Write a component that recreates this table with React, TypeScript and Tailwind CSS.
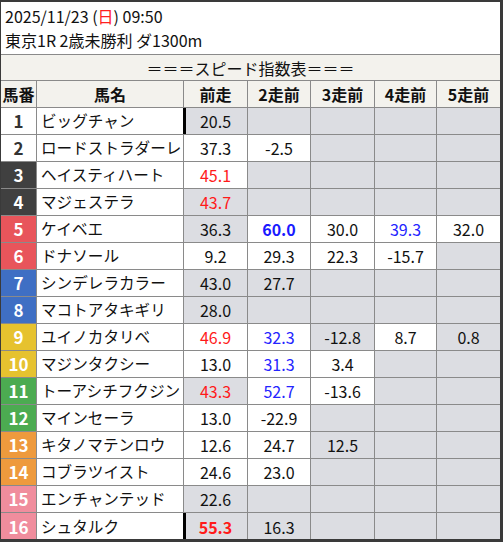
import React from 'react';

type Cell = { v?: string; g?: boolean; t?: 'r' | 'b' | 'rb' | 'bb' };
type Row = { n: number; name: string; bar?: boolean; cells: Cell[] };

const G = (v?: string, t?: Cell['t']): Cell => ({ v, g: true, t });
const W = (v?: string, t?: Cell['t']): Cell => ({ v, g: false, t });

const rows: Row[] = [
    { n: 1, name: 'ビッグチャン', bar: true, cells: [G('20.5'), G(), G(), G(), G()] },
    { n: 2, name: 'ロードストラダーレ', cells: [W('37.3'), W('-2.5'), G(), G(), G()] },
    { n: 3, name: 'ヘイスティハート', cells: [W('45.1', 'r'), G(), G(), G(), G()] },
    { n: 4, name: 'マジェステラ', cells: [G('43.7', 'r'), G(), G(), G(), G()] },
    { n: 5, name: 'ケイベエ', cells: [G('36.3'), W('60.0', 'bb'), W('30.0'), W('39.3', 'b'), W('32.0')] },
    { n: 6, name: 'ドナソール', cells: [W('9.2'), W('29.3'), W('22.3'), W('-15.7'), G()] },
    { n: 7, name: 'シンデレラカラー', cells: [G('43.0'), G('27.7'), G(), G(), G()] },
    { n: 8, name: 'マコトアタキギリ', cells: [G('28.0'), G(), G(), G(), G()] },
    { n: 9, name: 'ユイノカタリベ', cells: [W('46.9', 'r'), W('32.3', 'b'), G('-12.8'), W('8.7'), G('0.8')] },
    { n: 10, name: 'マジンタクシー', cells: [W('13.0'), W('31.3', 'b'), W('3.4'), G(), G()] },
    { n: 11, name: 'トーアシチフクジン', cells: [G('43.3', 'r'), W('52.7', 'b'), W('-13.6'), G(), G()] },
    { n: 12, name: 'マインセーラ', cells: [W('13.0'), W('-22.9'), G(), G(), G()] },
    { n: 13, name: 'キタノマテンロウ', cells: [W('12.6'), W('24.7'), G('12.5'), G(), G()] },
    { n: 14, name: 'コブラツイスト', cells: [W('24.6'), W('23.0'), G(), G(), G()] },
    { n: 15, name: 'エンチャンテッド', cells: [G('22.6'), G(), G(), G(), G()] },
    { n: 16, name: 'シュタルク', bar: true, cells: [G('55.3', 'rb'), G('16.3'), G(), G(), G()] },
];

const gateColor = (n: number) => {
    if (n <= 2) return 'bg-white text-[#333]';
    if (n <= 4) return 'bg-[#404040] text-white';
    if (n <= 6) return 'bg-[#e8555b] text-white';
    if (n <= 8) return 'bg-[#3f6fc4] text-white';
    if (n <= 10) return 'bg-[#e6c22f] text-white';
    if (n <= 12) return 'bg-[#4cab51] text-white';
    if (n <= 14) return 'bg-[#ee9a3d] text-white';
    return 'bg-[#f08d9d] text-white';
};

const textColor = (t?: Cell['t']) => {
    if (t === 'r') return 'text-[#ff1a1a]';
    if (t === 'rb') return 'text-[#ff1a1a] font-bold';
    if (t === 'b') return 'text-[#2424ff]';
    if (t === 'bb') return 'text-[#1a1aff] font-bold';
    return 'text-[#111]';
};

const cols = 'grid grid-cols-[36px_147px_64px_63px_64px_62px_63px]';
const font = { fontFamily: '"Noto Sans CJK JP", "Noto Sans", sans-serif' };

export default function App() {
    return (
        <div
            className="w-[503px] h-[542px] bg-white border-[#3a3a3a] border-l-[1px] border-t-[2px] border-r-[3px] border-b-[3px] overflow-hidden text-[#111]"
            style={font}
        >
            {/* race info */}
            <div className="h-[52px] px-[4px] flex flex-col justify-center text-[16px] leading-[24px]">
                <div>
                    2025/11/23 (<span className="text-[#ff2020]">日</span>) 09:50
                </div>
                <div>東京1R 2歳未勝利 ダ1300m</div>
            </div>

            <div className="h-[27px] border-y border-[#8a8a8a] bg-[#f3f2ed] flex items-center justify-center text-[16px]">
                ＝＝＝スピード指数表＝＝＝
            </div>

            <div className={`${cols} h-[27px] border-b border-[#8a8a8a] bg-[#f3f2ed] font-bold text-[16px]`}>
                {['馬番', '馬名', '前走', '2走前', '3走前', '4走前', '5走前'].map((h, i) => (
                    <div
                        key={h}
                        className={`flex items-center justify-center ${i < 6 ? 'border-r border-[#8a8a8a]' : ''}`}
                    >
                        {h}
                    </div>
                ))}
            </div>

            {rows.map((r, ri) => (
                <div
                    key={r.n}
                    className={`${cols} h-[27px] ${ri < rows.length - 1 ? 'border-b border-[#8a8a8a]' : ''} text-[16px]`}
                >
                    <div className={`flex items-center justify-center font-bold text-[17px] border-r border-[#8a8a8a] ${gateColor(r.n)}`}>
                        {r.n}
                    </div>
                    <div className={`flex items-center pl-[4px] whitespace-nowrap overflow-hidden text-[15.6px] border-r ${r.bar ? 'border-black' : 'border-[#8a8a8a]'}`}>
                        {r.name}
                    </div>
                    {r.cells.map((c, ci) => (
                        <div
                            key={ci}
                            className={`flex items-center justify-center ${c.g ? 'bg-[#dcdde2]' : 'bg-white'} ${ci < 4 ? 'border-r border-[#8a8a8a]' : ''} ${ci === 0 && r.bar ? 'shadow-[inset_2px_0_0_#000]' : ''} ${textColor(c.t)}`}
                        >
                            {c.v}
                        </div>
                    ))}
                </div>
            ))}
        </div>
    );
}
